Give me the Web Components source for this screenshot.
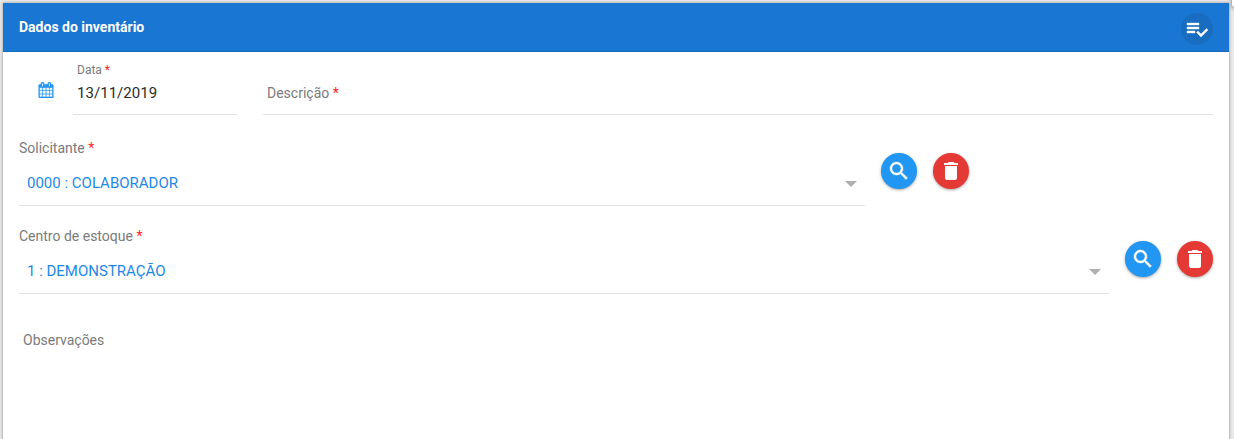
<!DOCTYPE html>
<html lang="pt-BR">
<head>
<meta charset="utf-8">
<title>Dados do inventário</title>
<style>
  body {
    margin: 0;
    height: 439px;
    overflow: hidden;
    background: #e9e9e9;
    color: #7b7b7b;
    font-family: Roboto, "Liberation Sans", sans-serif;
    font-size: 14px;
    line-height: 20px;
  }
</style>
</head>
<body>
<inventory-form></inventory-form>

<script>
const ICONS = {
  check: '<svg viewBox="0 0 24 24"><path d="M14 10H2v2h12v-2zm0-4H2v2h12V6zM2 16h8v-2H2v2zm19.5-4.5L23 13l-6.99 7-4.51-4.5L13 14l3.01 3 5.49-5.5z"/></svg>',
  search: '<svg viewBox="0 0 24 24"><path d="M15.5 14h-.79l-.28-.27C15.41 12.59 16 11.11 16 9.5 16 5.91 13.09 3 9.5 3S3 5.91 3 9.5 5.91 16 9.5 16c1.61 0 3.09-.59 4.23-1.57l.27.28v.79l5 4.99L20.49 19l-4.99-5zm-6 0C7.01 14 5 11.99 5 9.5S7.01 5 9.5 5 14 7.01 14 9.5 11.99 14 9.5 14z"/></svg>',
  trash: '<svg viewBox="0 0 24 24"><path d="M6 19c0 1.1.9 2 2 2h8c1.1 0 2-.9 2-2V7H6v12zM19 4h-3.500l-1-1h-5l-1 1H5v2h14V4z"/></svg>',
  calendar: '<svg viewBox="0 0 1664 1792"><path d="M128 1664h288v-288H128v288zm352 0h320v-288H480v288zM128 1312h288V992H128v320zm352 0h320V992H480v320zM128 928h288V640H128v288zm736 736h320v-288H864v288zM480 928h320V640H480v288zm768 736h288v-288h-288v288zM864 1312h320V992H864v320zM512 448V160q0-13-9.500-22.500T480 128h-64q-13 0-22.500 9.500T384 160v288q0 13 9.500 22.500T416 480h64q13 0 22.500-9.500T512 448zm736 864h288V992h-288v320zM864 928h320V640H864v288zm384 0h288V640h-288v288zm32-480V160q0-13-9.500-22.500T1248 128h-64q-13 0-22.500 9.500T1152 160v288q0 13 9.500 22.500t22.500 9.500h64q13 0 22.500-9.500t9.500-22.500zm384-64v1280q0 52-38 90t-90 38H128q-52 0-90-38t-38-90V384q0-52 38-90t90-38h128v-96q0-66 47-113T416 0h64q66 0 113 47t47 113v96h384v-96q0-66 47-113t113-47h64q66 0 113 47t47 113v96h128q52 0 90 38t38 90z"/></svg>'
};

class RoundButton extends HTMLElement {
  constructor() {
    super();
    this.attachShadow({ mode: "open" });
  }

  connectedCallback() {
    this.shadowRoot.innerHTML = /* HTML */ `
      <style>
        :host { display: block; flex: none; }
        button {
          display: flex;
          align-items: center;
          justify-content: center;
          width: 36px;
          height: 36px;
          padding: 0;
          border: none;
          border-radius: 50%;
          color: #fff;
          background: #2196f3;
          box-shadow: 0 1px 3px rgba(0, 0, 0, 0.36);
        }
        button.danger { background: #e53935; }
        button.flat {
          width: 32px;
          height: 32px;
          background: #186dc1;
          box-shadow: none;
        }
        svg {
          display: block;
          width: 24px;
          height: 24px;
          fill: currentColor;
          stroke: currentColor;
          stroke-width: 0.4;
        }
        .danger svg { stroke: none; }
      </style>
      <button class="${this.getAttribute("type") || "normal"}" aria-label="${this.getAttribute("label")}">
        ${ICONS[this.getAttribute("icon")]}
      </button>
    `;
  }
}

class FieldLabel extends HTMLElement {
  constructor() {
    super();
    this.attachShadow({ mode: "open" });
  }

  connectedCallback() {
    this.shadowRoot.innerHTML = /* HTML */ `
      <style>
        :host { display: block; white-space: nowrap; }
        span { color: #ff1f1f; }
      </style>
      <slot></slot>${this.hasAttribute("required") ? " <span>*</span>" : ""}
    `;
  }
}

class TextField extends HTMLElement {
  constructor() {
    super();
    this.attachShadow({ mode: "open" });
  }

  connectedCallback() {
    const value = this.getAttribute("value");
    this.shadowRoot.innerHTML = /* HTML */ `
      <style>
        :host {
          display: flex;
          flex-direction: column;
          justify-content: flex-end;
          box-sizing: border-box;
          height: 55px;
          padding: 0 4px 11px;
          border-bottom: 1px solid #e0e0e0;
        }
        field-label.small { font-size: 12px; line-height: 16px; margin-bottom: 5px; }
        .value { color: #2b2b2b; font-size: 15px; letter-spacing: 0.04px; }
      </style>
      <field-label class="${value ? "small" : ""}" required>${this.getAttribute("label")}</field-label>
      ${value ? `<div class="value">${value}</div>` : ""}
    `;
  }
}

class LookupField extends HTMLElement {
  constructor() {
    super();
    this.attachShadow({ mode: "open" });
  }

  connectedCallback() {
    this.shadowRoot.innerHTML = /* HTML */ `
      <style>
        :host { display: flex; height: 68px; gap: 16px; }
        .field { flex: 1; }
        .select {
          display: flex;
          align-items: center;
          justify-content: space-between;
          box-sizing: border-box;
          height: 48px;
          padding: 2px 8px 0;
          border-bottom: 1px solid #e0e0e0;
          color: #1e88e5;
          font-size: 15px;
        }
        .arrow {
          margin-top: 3px;
          border: 6px solid transparent;
          border-top-color: #b0b0b0;
          border-bottom: 0;
        }
        round-button { margin-top: 15px; }
      </style>
      <div class="field">
        <field-label required>${this.getAttribute("label")}</field-label>
        <div class="select"><slot></slot><i class="arrow"></i></div>
      </div>
      <round-button icon="search" label="Pesquisar"></round-button>
      <round-button icon="trash" type="danger" label="Remover"></round-button>
    `;
  }
}

class InventoryForm extends HTMLElement {
  constructor() {
    super();
    this.attachShadow({ mode: "open" });
  }

  connectedCallback() {
    this.shadowRoot.innerHTML = /* HTML */ `
      <style>
        :host { display: block; padding: 3px 5px 0 3px; }
        .card {
          height: 450px;
          background: #fff;
          box-shadow: 0 0 3px rgba(0, 0, 0, 0.4);
        }
        header {
          display: flex;
          align-items: center;
          justify-content: space-between;
          box-sizing: border-box;
          height: 49px;
          padding: 3px 16px 0;
          background: #1976d2;
          border-bottom: 1px solid #1769bb;
          color: #fff;
        }
        h1 { margin: 0 0 4px; font-size: 14px; font-weight: 700; }
        .body { padding: 8px 16px; }
        .row { display: flex; }
        .calendar { width: 54px; padding: 22px 0 0 19px; box-sizing: border-box; }
        .calendar svg {
          display: block;
          width: 16px;
          height: 16px;
          fill: #2196f3;
          stroke: #2196f3;
          stroke-width: 24;
        }
        .date { width: 164px; margin-right: 26px; }
        .description { flex: 1; }
        .requester { width: 950px; margin-top: 23px; }
        .stock { margin-top: 20px; }
        .notes { margin: 36px 4px 0; }
        /* corner of the neighbouring panel */
        .edge {
          position: absolute;
          top: -10px;
          left: 1232px;
          width: 20px;
          height: 17px;
          border-radius: 3px;
          background: #fff;
          box-shadow: 0 1px 4px rgba(0, 0, 0, 0.5);
        }
      </style>
      <section class="card">
        <header>
          <h1>Dados do inventário</h1>
          <round-button icon="check" type="flat" label="Salvar"></round-button>
        </header>
        <div class="body">
          <div class="row">
            <div class="calendar">${ICONS.calendar}</div>
            <text-field class="date" label="Data" value="13/11/2019"></text-field>
            <text-field class="description" label="Descrição"></text-field>
          </div>
          <lookup-field class="requester" label="Solicitante">0000 : COLABORADOR</lookup-field>
          <lookup-field class="stock" label="Centro de estoque">1 : DEMONSTRAÇÃO</lookup-field>
          <field-label class="notes">Observações</field-label>
        </div>
      </section>
      <div class="edge"></div>
    `;
  }
}

customElements.define("round-button", RoundButton);
customElements.define("field-label", FieldLabel);
customElements.define("text-field", TextField);
customElements.define("lookup-field", LookupField);
customElements.define("inventory-form", InventoryForm);
</script>
</body>
</html>
